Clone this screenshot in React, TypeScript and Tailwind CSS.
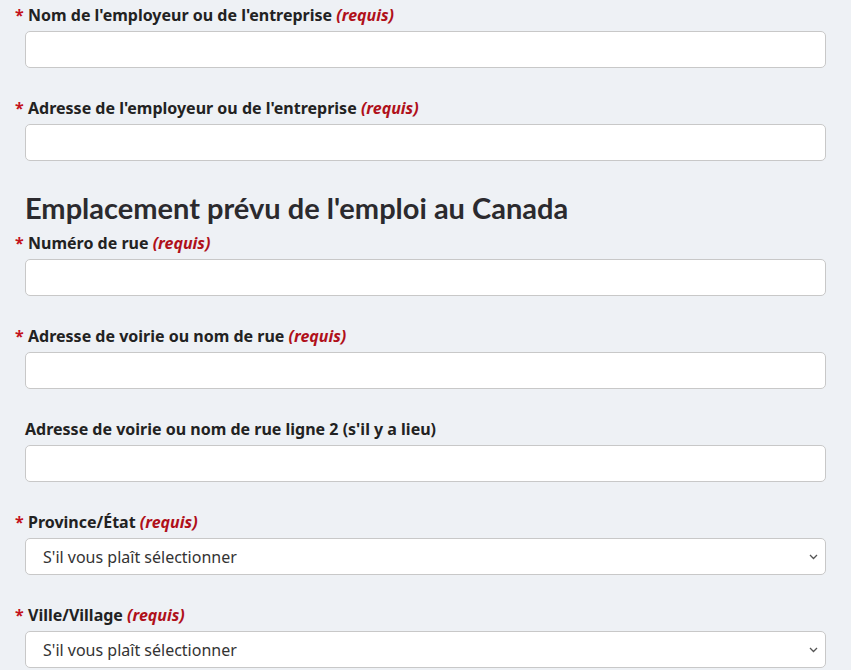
import React from "react";

// Champ texte ou liste déroulante avec son libellé
type FieldProps = {
  label: string;
  required?: boolean;
  select?: boolean;
};

function Field({ label, required, select }: FieldProps) {
  return (
    <div className="mb-[30px]">
      {required ? (
        <label className="flex items-baseline pl-[3px] text-[16px] font-bold leading-[20px] text-[#222]">
          <span className="-ml-[13px] w-[13px] text-[#c3121b]">*</span>
          <span>
            {label}
            <span className="italic text-[#b0101a]"> (requis)</span>
          </span>
        </label>
      ) : (
        <label className="block text-[16px] font-bold leading-[20px] text-[#222]">{label}</label>
      )}
      {select ? (
        <div className="relative mt-[6px] h-[37px] rounded-[5px] border border-[#c8c8c8] bg-white">
          <span className="absolute left-[17px] top-[7px] text-[16px] leading-[22px] text-[#333]">
            S'il vous plaît sélectionner
          </span>
          <svg
            className="absolute right-[7px] top-[15px]"
            width="9"
            height="6"
            viewBox="0 0 9 6"
            fill="none"
            stroke="#555"
            strokeWidth="1.3"
          >
            <path d="M1 1l3.5 3.5L8 1" />
          </svg>
        </div>
      ) : (
        <input
          type="text"
          className="mt-[6px] block h-[37px] w-full rounded-[5px] border border-[#c8c8c8] bg-white"
        />
      )}
    </div>
  );
}

export default function App() {
  return (
    <div
      className="h-[670px] overflow-hidden bg-[#eef1f5] px-[25px] pt-[5px]"
      style={{ fontFamily: '"Noto Sans", "Open Sans", sans-serif' }}
    >
      <Field label="Nom de l'employeur ou de l'entreprise" required />
      <Field label="Adresse de l'employeur ou de l'entreprise" required />
      <h2
        className="-mt-[1px] mb-[7px] text-[29px] font-bold leading-[36px] text-[#2b2a2e]"
        style={{ fontFamily: "Lato, sans-serif" }}
      >
        Emplacement prévu de l'emploi au Canada
      </h2>
      <Field label="Numéro de rue" required />
      <Field label="Adresse de voirie ou nom de rue" required />
      <Field label="Adresse de voirie ou nom de rue ligne 2 (s'il y a lieu)" />
      <Field label="Province/État" required select />
      <Field label="Ville/Village" required select />
    </div>
  );
}
